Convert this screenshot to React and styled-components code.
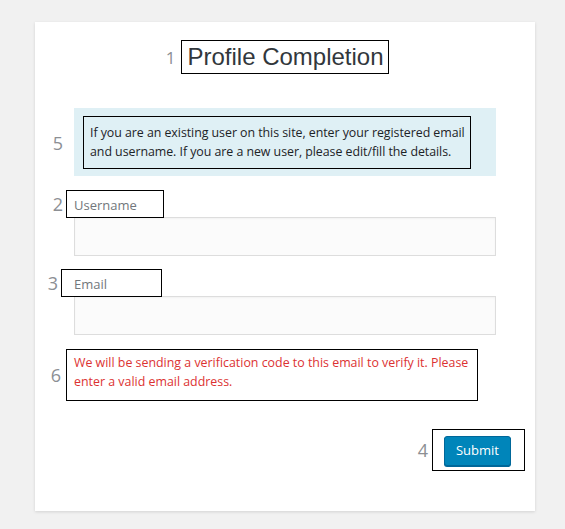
import React from "react";
import styled, { createGlobalStyle } from "styled-components";

const Global = createGlobalStyle`
  html, body { margin: 0; padding: 0; background: #f1f1f1; }
  body { font-family: "Open Sans", "Noto Sans", sans-serif; }
  * { box-sizing: border-box; }
`;

const Page = styled.div`
  padding: 22px 30px 18px 35px;
`;

const Card = styled.div`
  width: 500px;
  height: 489px;
  background: #fff;
  box-shadow: 0 1px 3px rgba(0, 0, 0, 0.13);
  padding: 18px 39px 0 39px;
  display: flex;
  flex-direction: column;
`;

const Marker = styled.span`
  position: absolute;
  top: 50%;
  right: calc(100% + ${(p) => p.$gap}px);
  transform: translateY(-50%);
  font-family: "Open Sans", sans-serif;
  font-size: ${(p) => p.$size || 17}px;
  color: #8c8f94;
  line-height: 1;
`;

const TitleRow = styled.div`
  display: flex;
  justify-content: center;
`;

const Title = styled.h1`
  position: relative;
  margin: 0;
  border: 1px solid #000;
  padding: 0 4px 0 5px;
  height: 34px;
  display: flex;
  align-items: center;
  font-family: "Liberation Sans", Arial, sans-serif;
  font-weight: 400;
  font-size: 24px;
  color: #32373c;
`;

const InfoPanel = styled.div`
  margin-top: 34px;
  height: 68px;
  background: #dff0f5;
  padding: 8px 0 0 9px;
  position: relative;
`;

const InfoText = styled.p`
  position: relative;
  margin: 0;
  width: 388px;
  height: 53px;
  border: 1px solid #000;
  padding: 6px 0 0 6px;
  font-size: 12.4px;
  letter-spacing: -0.05px;
  line-height: 19px;
  color: #1d2327;
`;

const Field = styled.div`
  display: flex;
  flex-direction: column;
  margin-top: ${(p) => p.$top}px;
`;

const LabelBox = styled.label`
  position: relative;
  align-self: flex-start;
  margin-left: ${(p) => -p.$indent}px;
  width: ${(p) => p.$w}px;
  height: 28px;
  border: 1px solid #000;
  padding: 2px 0 0 ${(p) => p.$indent - 1}px;
  font-size: 13px;
  line-height: 24px;
  color: #72777c;
`;

const Input = styled.input`
  display: block;
  width: 422px;
  height: 39px;
  margin-top: -1px;
  background: #fbfbfb;
  border: 1px solid #ddd;
  box-shadow: inset 0 1px 2px rgba(0, 0, 0, 0.04);
  font: inherit;
  outline: none;
`;

const Notice = styled.p`
  position: relative;
  margin: 14px 0 0 -8px;
  width: 412px;
  height: 52px;
  border: 1px solid #000;
  padding: 3px 4px 0 7px;
  font-size: 12.4px;
  line-height: 19px;
  color: #dc3232;
`;

const SubmitRow = styled.div`
  display: flex;
  justify-content: flex-end;
  margin: 28px -29px 0 0;
`;

const SubmitBox = styled.div`
  position: relative;
  width: 93px;
  height: 42px;
  border: 1px solid #000;
  padding: 6px 0 0 11px;
`;

const Button = styled.button`
  width: 67px;
  height: 30px;
  background: #0085ba;
  border: 1px solid #006799;
  border-radius: 3px;
  box-shadow: 0 1px 0 #006799;
  color: #fff;
  font-family: "Open Sans", sans-serif;
  font-size: 13px;
  padding: 0 0 2px;
  cursor: pointer;
`;

export default function App() {
  return (
    <>
      <Global />
      <Page>
        <Card>
          <TitleRow>
            <Title>
              <Marker $gap={7} $size={17}>1</Marker>
              Profile Completion
            </Title>
          </TitleRow>
          <InfoPanel>
            <InfoText>
              <Marker $gap={21} $size={18}>5</Marker>
              If you are an existing user on this site, enter your registered email
              and username. If you are a new user, please edit/fill the details.
            </InfoText>
          </InfoPanel>
          <Field $top={14}>
            <LabelBox $indent={8} $w={98}>
              <Marker $gap={4} $size={18}>2</Marker>
              Username
            </LabelBox>
            <Input type="text" />
          </Field>
          <Field $top={13}>
            <LabelBox $indent={13} $w={101}>
              <Marker $gap={4} $size={18}>3</Marker>
              Email
            </LabelBox>
            <Input type="email" />
          </Field>
          <Notice>
            <Marker $gap={6} $size={18}>6</Marker>
            We will be sending a verification code to this email to verify it. Please
            enter a valid email address.
          </Notice>
          <SubmitRow>
            <SubmitBox>
              <Marker $gap={5} $size={18}>4</Marker>
              <Button type="submit">Submit</Button>
            </SubmitBox>
          </SubmitRow>
        </Card>
      </Page>
    </>
  );
}
